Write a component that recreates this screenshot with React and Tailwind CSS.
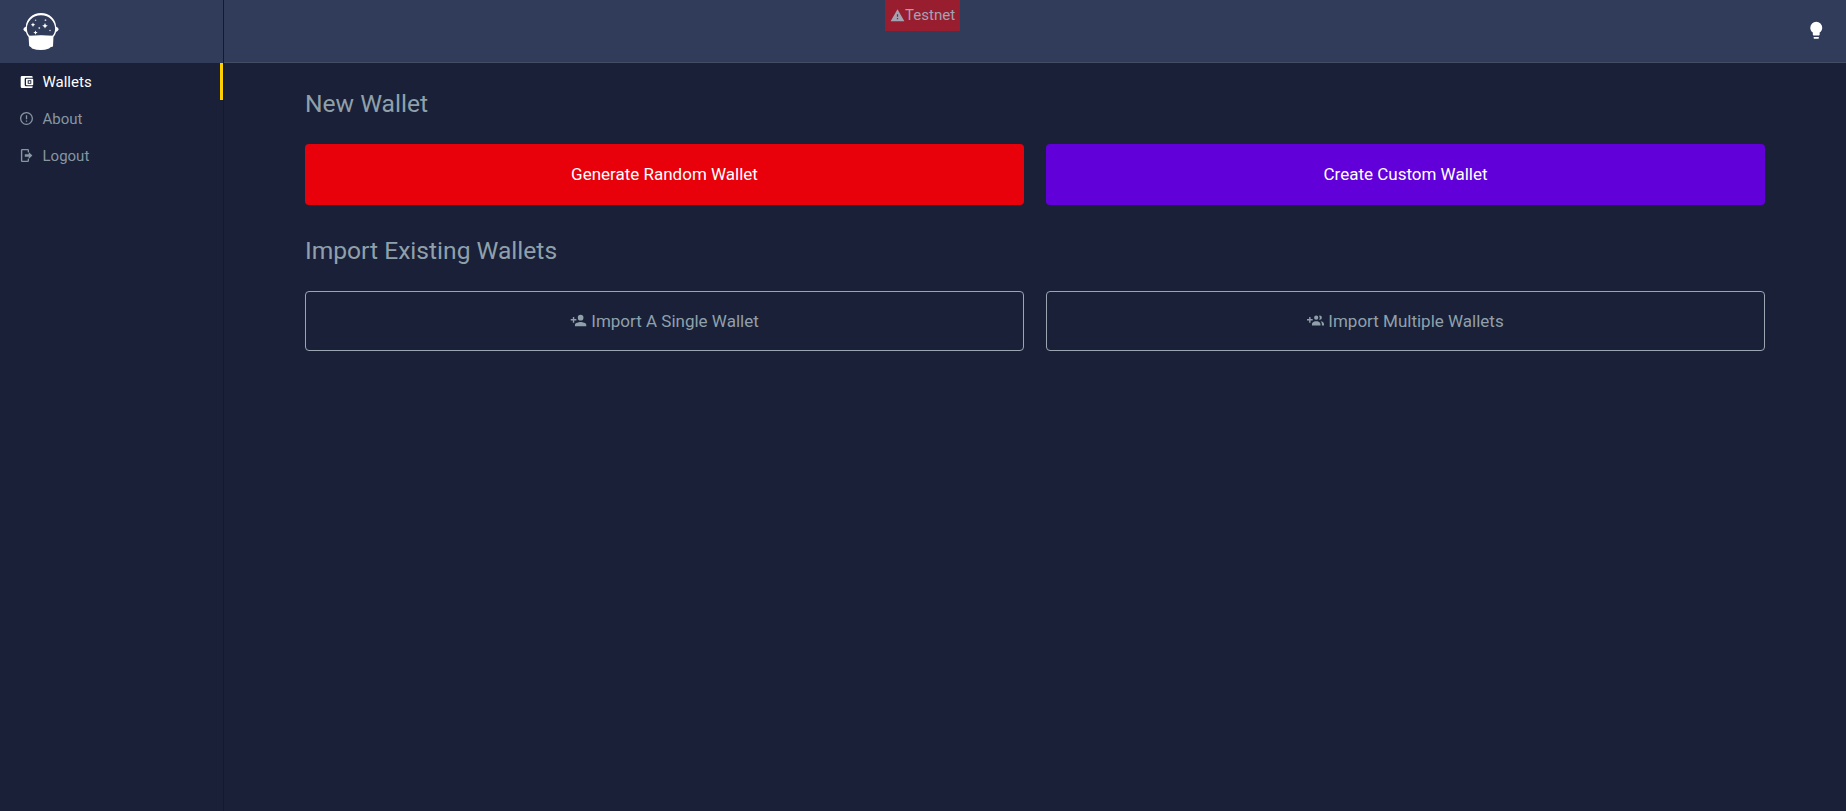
import { MdWarning } from "react-icons/md";

function Logo() {
  return (
    <svg width="36" height="38" viewBox="0 0 36 38" fill="white">
      <path d="M5.5 22.8Q18 21.600 30.5 22.8L30 33.500Q27 34.200 26 35.500Q18 38.500 9 35.500Q8.500 34 6.200 33Z" />
      <path fillRule="evenodd" d="M18 0C26.500 0 32.700 5.800 33.200 13.700Q35.300 14.500 35.700 16.300Q35.300 18.100 33.100 18.900Q32.300 21.800 30.500 23.800H5.500Q3.700 21.800 2.900 18.900Q.7 18.100 .3 16.300Q.7 14.500 2.800 13.700C3.300 5.800 9.500 0 18 0ZM18 2.200C9.700 2.200 3.900 8.300 3.900 15.500C3.900 19 5.100 21.500 7 23.400Q18 22 29 23.400C30.900 21.500 32.100 19 32.100 15.500C32.100 8.300 26.300 2.200 18 2.200Z" />
      <path d="M22 10l.9 1.900 1.900.9-1.900.9-.9 1.900-.9-1.900-1.900-.9 1.900-.9zM10 9.600l.7 1.500 1.500.7-1.500.7-.7 1.500-.7-1.500-1.500-.7 1.500-.7zM12.500 17.400l.7 1.500 1.500.7-1.500.7-.7 1.500-.7-1.500-1.500-.7 1.500-.7z" />
      <g fillOpacity=".75">
        <circle cx="12.600" cy="7.300" r=".8" />
        <circle cx="22.500" cy="7.200" r=".9" />
        <circle cx="16.300" cy="15" r=".9" />
        <circle cx="27" cy="17.500" r=".8" />
      </g>
    </svg>
  );
}

function WalletIcon() {
  return (
    <svg width="14" height="12" viewBox="0 0 14 12" fill="currentColor">
      <path d="M2 0H11.500Q12.700 0 12.700 1.300V1.700H6Q4.700 1.700 4.700 3V9Q4.700 10.300 6 10.300H12.700V10.700Q12.700 12 11.500 12H2Q.7 12 .7 10.700V1.300Q.7 0 2 0Z" />
      <path fillRule="evenodd" d="M6.700 2.700H12.500Q13.200 2.700 13.200 3.400V8.600Q13.200 9.300 12.500 9.300H6.700Q6 9.300 6 8.600V3.400Q6 2.700 6.700 2.700ZM7.700 4.300V7.700H11.300V4.300Z" />
      <rect x="8.700" y="5.200" width="1.700" height="1.700" />
    </svg>
  );
}

function AboutIcon() {
  return (
    <svg width="13" height="13" viewBox="2 2 20 20" fill="currentColor">
      <path d="M11 15H13V17H11V15M11 7H13V13H11V7M12 2C6.470 2 2 6.500 2 12A10 10 0 0 0 12 22A10 10 0 0 0 22 12A10 10 0 0 0 12 2M12 20A8 8 0 0 1 4 12A8 8 0 0 1 12 4A8 8 0 0 1 20 12A8 8 0 0 1 12 20Z" />
    </svg>
  );
}

function LogoutIcon() {
  return (
    <svg width="14" height="13" viewBox="0 0 14 13" fill="currentColor">
      <path d="M2.200 0H7.700Q9 0 9 1.300V3.300H7.700V1.300H2.300V11.700H7.700V9.700H9V11.700Q9 13 7.700 13H2.200Q.9 13 .9 11.700V1.300Q.9 0 2.200 0Z" />
      <path d="M4.800 5.300H8.700V2.900L12.400 6.500L8.700 10.100V7.700H4.800Z" />
    </svg>
  );
}

function MdiIcon({ size, d, className }) {
  return (
    <svg width={size} height={size} viewBox="0 0 24 24" fill="currentColor" className={className}>
      <path d={d} />
    </svg>
  );
}

const ACCOUNT_PLUS =
  "M15,14C12.330,14 7,15.330 7,18V20H23V18C23,15.330 17.670,14 15,14M6,10V7H4V10H1V12H4V15H6V12H9V10M15,12A4,4 0 0,0 19,8A4,4 0 0,0 15,4A4,4 0 0,0 11,8A4,4 0 0,0 15,12Z";
const ACCOUNTS_PLUS =
  "M19 17V19H7V17S7 13 13 13 19 17 19 17M16 8A3 3 0 1 0 13 11A3 3 0 0 0 16 8M19.200 13.060A5.600 5.600 0 0 1 21 17V19H24V17S24 13.550 19.200 13.060M18 5A2.910 2.910 0 0 0 17.110 5.140A5 5 0 0 1 17.110 10.860A2.910 2.910 0 0 0 18 11A3 3 0 0 0 18 5M8 10H5V7H3V10H0V12H3V15H5V12H8Z";
const LIGHTBULB =
  "M12,2A7,7 0 0,0 5,9C5,11.380 6.190,13.470 8,14.740V17A1,1 0 0,0 9,18H15A1,1 0 0,0 16,17V14.740C17.810,13.470 19,11.380 19,9A7,7 0 0,0 12,2M9,21A1,1 0 0,0 10,22H14A1,1 0 0,0 15,21V20H9V21Z";

function NavItem({ icon, label, active }) {
  return (
    <a
      className={
        active
          ? "flex h-[37px] items-center border-r-[3px] border-[#ffd000] pl-5 text-white"
          : "flex h-[37px] items-center border-r-[3px] border-transparent pl-5 text-[#8796a2]"
      }
    >
      <span className="flex w-[22.5px] items-center">{icon}</span>
      <span className="pt-[2px]">{label}</span>
    </a>
  );
}

export default function App() {
  return (
    <div className="flex h-screen overflow-hidden bg-[#192038] font-[Roboto,sans-serif] text-[15px] text-[#90a0ab]">
      <aside className="w-[224px] shrink-0 border-r border-[#131a30]">
        <div className="flex h-[63px] items-start bg-[#303c5a] pt-[13px] pl-[23px]">
          <Logo />
        </div>
        <nav>
          <NavItem active icon={<WalletIcon />} label="Wallets" />
          <NavItem icon={<AboutIcon />} label="About" />
          <NavItem icon={<LogoutIcon />} label="Logout" />
        </nav>
      </aside>
      <div className="flex min-w-0 flex-1 flex-col">
        <header className="grid h-[63px] shrink-0 grid-cols-[661.4px_74.5px_1fr] items-start border-b border-[#454d62] bg-[#303c5a]">
          <div />
          <div className="flex h-[31px] items-center justify-center bg-[#981e2f] text-[15.1px] text-[#a3a3b3]">
            <MdWarning size={15} className="mb-px" />
            <span>Testnet</span>
          </div>
          <div className="flex h-[60px] items-center justify-end pr-[20px] text-white">
            <MdiIcon size={20.5} d={LIGHTBULB} />
          </div>
        </header>
        <main className="w-[1541px] pl-[81px]">
          <h2 className="mt-[23px] text-[24.6px] leading-9">New Wallet</h2>
          <div className="mt-[22px] grid grid-cols-2 gap-[22px] text-[17px] text-white">
            <button className="h-[61px] rounded bg-[#e8000b]">Generate Random Wallet</button>
            <button className="h-[61px] rounded bg-[#6200d9]">Create Custom Wallet</button>
          </div>
          <h2 className="mt-[28px] text-[24.6px] leading-9">Import Existing Wallets</h2>
          <div className="mt-[22px] grid grid-cols-2 gap-[22px] text-[17px]">
            <button className="flex h-[60px] items-center justify-center gap-1 rounded border border-[#9aa7b3] pt-px">
              <MdiIcon size={17} d={ACCOUNT_PLUS} className="mb-[2px]" />
              Import A Single Wallet
            </button>
            <button className="flex h-[60px] items-center justify-center gap-1 rounded border border-[#9aa7b3] pt-px">
              <MdiIcon size={17} d={ACCOUNTS_PLUS} className="mb-[2px]" />
              Import Multiple Wallets
            </button>
          </div>
        </main>
      </div>
    </div>
  );
}
